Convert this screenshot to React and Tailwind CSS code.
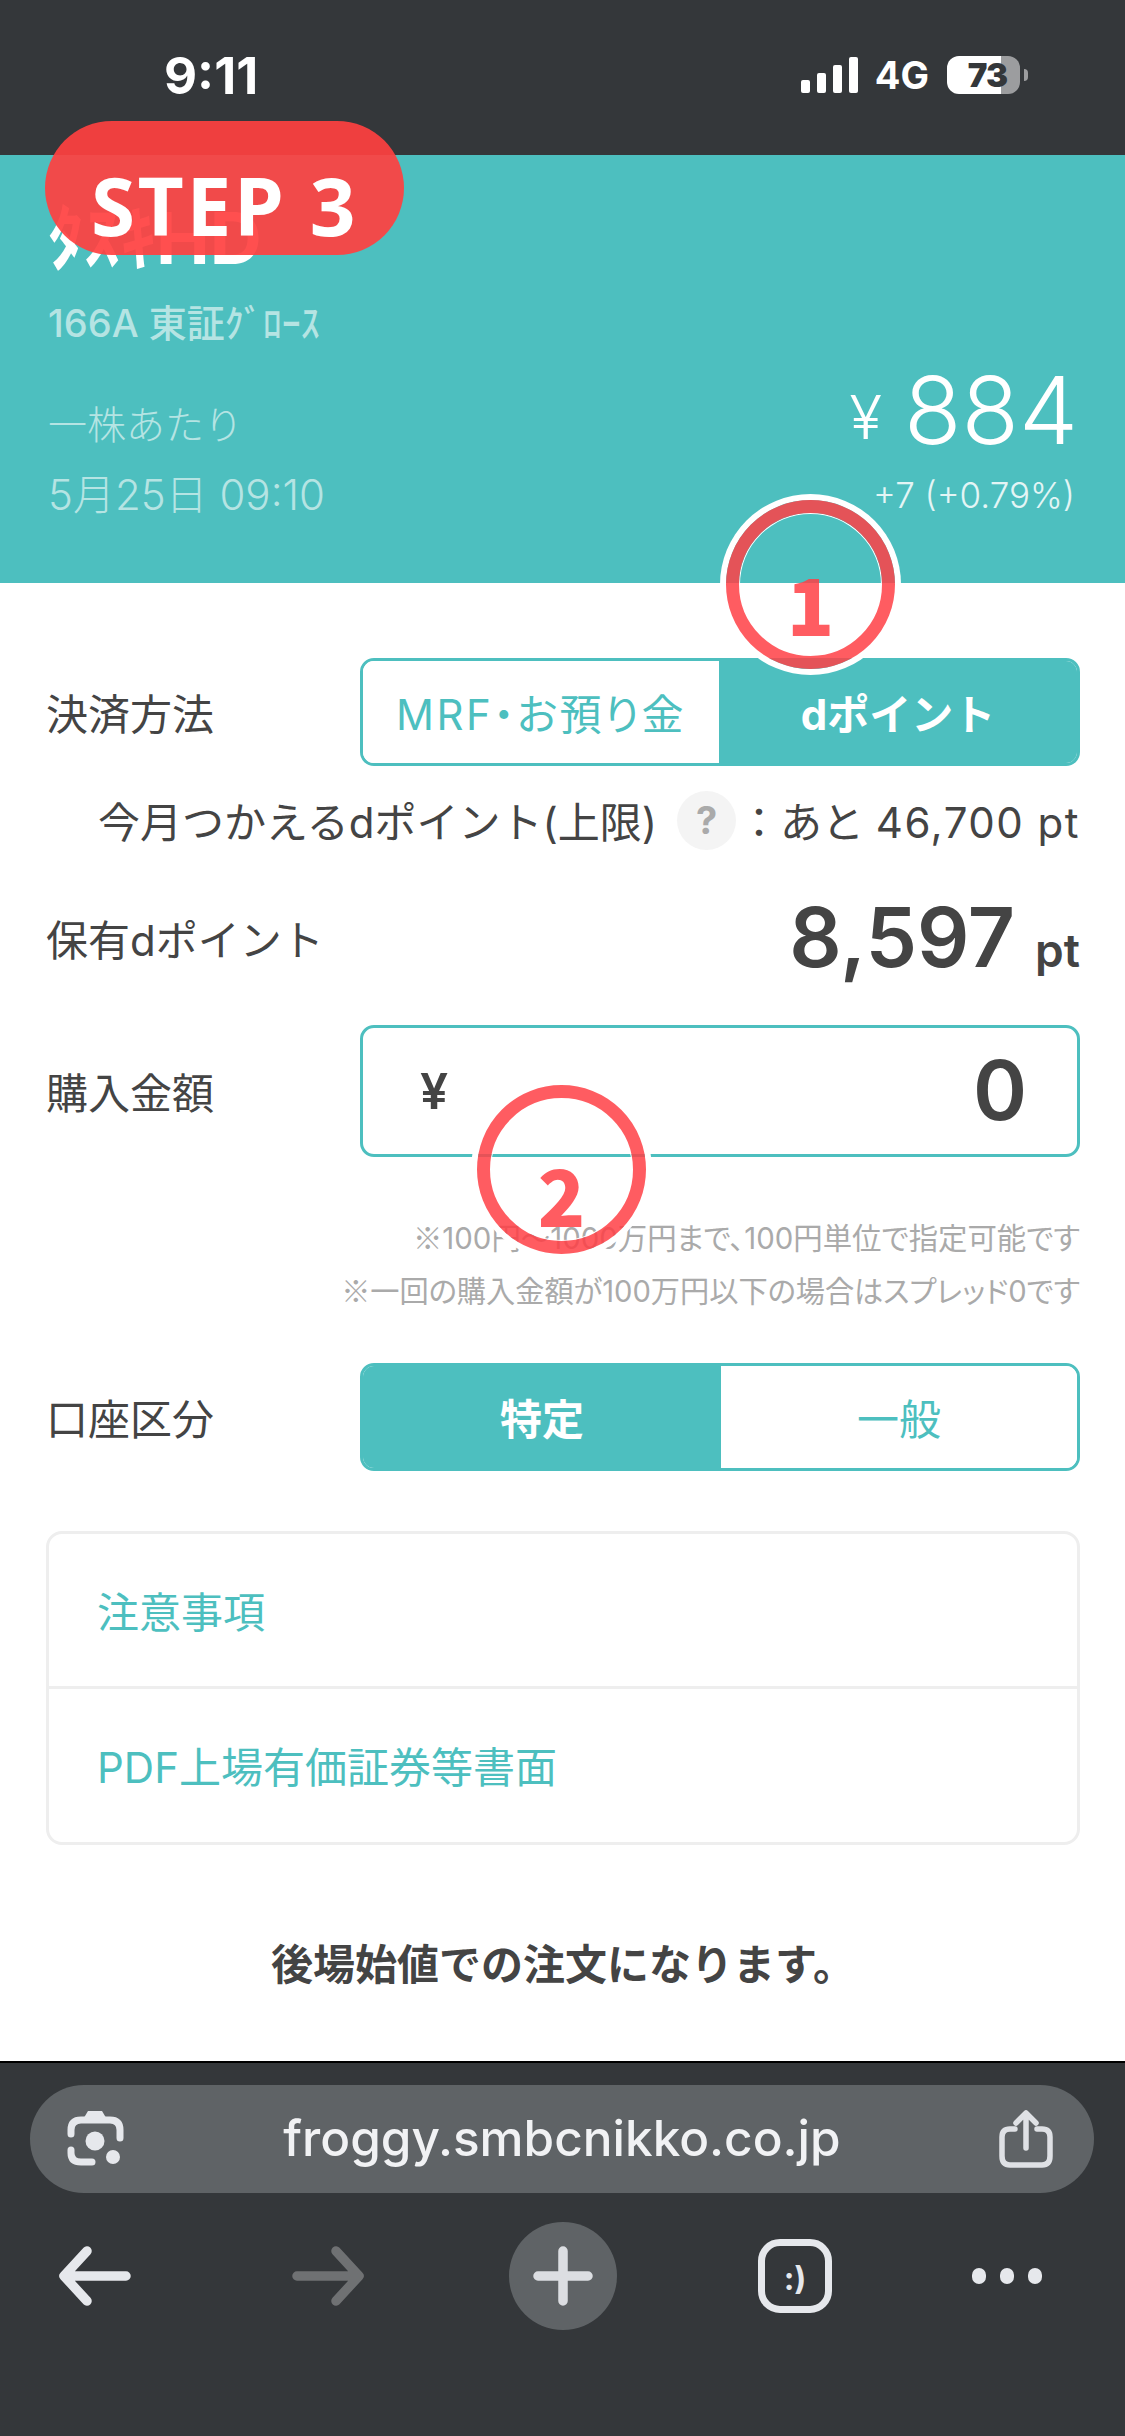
import React from "react";

const JP = "font-['Inter','Noto_Sans_CJK_JP',sans-serif]";
const CJK = "font-['Noto_Sans_CJK_JP',sans-serif]";

const Segment = ({ left, right, active, split }) => (
  <div className="flex h-[108px] w-[720px] overflow-hidden rounded-[14px] border-[3px] border-[#4dbfbf] text-[42px] leading-none">
    <div
      className={`flex h-full items-center justify-center pt-[5px] ${split} ${
        active === "left" ? "bg-[#4dbfbf] font-bold text-white" : "bg-white text-[#4dbfbf]"
      }`}
    >
      {left}
    </div>
    <div
      className={`flex h-full flex-1 items-center justify-center pt-[5px] ${
        active === "right" ? "bg-[#4dbfbf] font-bold text-white" : "bg-white text-[#4dbfbf]"
      }`}
    >
      {right}
    </div>
  </div>
);

const Label = ({ children }) => (
  <div className="w-[314px] shrink-0 pt-[6px] text-[42px] leading-none text-[#444444]">{children}</div>
);

const LensIcon = () => (
  <svg width="90" height="90" viewBox="0 0 90 90" fill="none" stroke="#e6e8ec" strokeWidth="7" strokeLinecap="round" className="-mr-[15px]">
    <path d="M21 40V36Q21 26 31 26H60Q70 26 70 36V44" />
    <path d="M21 56V59Q21 68 31 68H42" />
    <path d="M32 27L38 17H52L58 27Z" fill="#e6e8ec" stroke="none" />
    <circle cx="45" cy="47" r="9.5" fill="#e6e8ec" stroke="none" />
    <circle cx="63" cy="63" r="7" fill="#e6e8ec" stroke="none" />
  </svg>
);

const ShareIcon = () => (
  <svg width="54" height="58" viewBox="0 0 54 58" fill="none" stroke="#dfe1e5" strokeWidth="5.5" strokeLinecap="round" strokeLinejoin="round">
    <path d="M16 19H11Q3 19 3 27V46Q3 55 11 55H43Q51 55 51 46V27Q51 19 43 19H38" />
    <path d="M27 38V4M17 13L27 3L37 13" />
  </svg>
);

const Arrow = ({ color, flip }) => (
  <svg
    width="72"
    height="60"
    viewBox="0 0 72 60"
    fill="none"
    stroke={color}
    strokeWidth="9.5"
    strokeLinecap="round"
    strokeLinejoin="round"
    className={flip ? "-scale-x-100" : ""}
  >
    <path d="M5 30H67M28 5L5 30L28 55" />
  </svg>
);

const Marker = ({ num, className, numClass }) => (
  <div
    className={`absolute flex items-center justify-center rounded-full border-[13px] border-[#ff3f45]/[0.85] shadow-[0_0_0_6px_white,inset_0_0_0_1px_white] ${CJK} text-[78px] leading-none font-black text-[#ff3f45]/[0.85] ${className}`}
  >
    <span className={numClass}>{num}</span>
  </div>
);

const App = () => {
  return (
    <div className={`relative flex h-[2436px] w-[1125px] flex-col overflow-hidden bg-white ${JP}`}>
      {/* status bar */}
      <div className="flex h-[155px] shrink-0 items-start bg-[#34373a] text-white">
        <div className="ml-[164px] mt-[47px] text-[51px] leading-[58px] font-bold">9:11</div>
        <div className="ml-auto mr-[97px] mt-[56px] flex items-center">
          <svg width="57" height="36" viewBox="0 0 57 36" fill="white">
            <rect x="0" y="23" width="9" height="13" rx="2" />
            <rect x="16" y="16" width="9" height="20" rx="2" />
            <rect x="32" y="8" width="9" height="28" rx="2" />
            <rect x="48" y="0" width="9" height="36" rx="2" />
          </svg>
          <div className="ml-[17px] text-[38px] leading-none font-bold">4G</div>
          <div className="ml-[18px] flex h-[38px] w-[73px] items-center justify-end rounded-[12px] bg-[linear-gradient(90deg,#ffffff_74%,#9c9d9f_74%)] pr-[13px] text-[33px] leading-none font-black tracking-[-1px] text-[#34373a]">
            73
          </div>
          <div className="ml-[4px] h-[12px] w-[4px] rounded-r-full bg-[#9c9d9f]" />
        </div>
      </div>

      {/* stock header */}
      <div className="h-[428px] shrink-0 bg-[#4dbfbf] pl-[48px] pr-[50px] pt-[50px] text-white">
        <div className="h-[66px] text-[72px] leading-[66px] font-bold">ﾀｽｷHD</div>
        <div className="mt-[34px] h-[36px] text-[38px] leading-[36px] font-medium text-[#b5e4e3]">166A 東証ｸﾞﾛｰｽ</div>
        <div className="mt-[24px] flex h-[92px] items-end justify-between">
          <div className="mb-[9px] text-[39px] leading-[46px] font-light text-[#b5e4e3]">一株あたり</div>
          <div className="-mr-[3px] mt-[2px] flex items-center font-light leading-none">
            <span className="mt-[14px] text-[60px]">¥</span>
            <span className="ml-[22px] text-[94px]">884</span>
          </div>
        </div>
        <div className="mt-[15px] flex h-[46px] items-center justify-between font-light">
          <div className="text-[42px] leading-[46px] text-[#b5e4e3]">5月25日 09:10</div>
          <div className="text-[35px] leading-[46px] text-[#e3f5f5]">+7 (+0.79%)</div>
        </div>
      </div>

      {/* order form */}
      <div className="flex flex-1 flex-col pl-[46px] pr-[45px] pt-[75px]">
        <div className="flex items-center">
          <Label>決済方法</Label>
          <Segment
            left={<span className="tracking-[2.5px] [font-feature-settings:'palt']">MRF・お預り金</span>}
            right="dポイント"
            active="right"
            split="w-[356px]"
          />
        </div>
        <div className="mt-[24px] flex h-[60px] items-center justify-end pt-[5px] text-[42px] leading-none text-[#444444]">
          <span>今月つかえるdポイント(上限)</span>
          <span className="-mt-[5px] ml-[20px] flex h-[59px] w-[59px] items-center justify-center rounded-full bg-[#f4f4f4] text-[38px] font-bold text-[#aaaaaa]">
            ?
          </span>
          <span className="ml-[2px]">
            ：あと <span className="tracking-[1.5px]">46,700 pt</span>
          </span>
        </div>
        <div className="mt-[48px] flex h-[80px] items-center justify-between">
          <Label>保有dポイント</Label>
          <div className="flex items-baseline font-semibold leading-none text-[#444444]">
            <span className="text-[82px]">8,597</span>
            <span className="ml-[20px] text-[46px]">pt</span>
          </div>
        </div>
        <div className="mt-[47px] flex items-center">
          <Label>購入金額</Label>
          <div className="flex h-[132px] w-[720px] items-center justify-between rounded-[14px] border-[3px] border-[#4dbfbf] pl-[57px] pr-[50px] font-semibold leading-none text-[#444444]">
            <span className="text-[50px]">¥</span>
            <span className="text-[82px]">0</span>
          </div>
        </div>
        <div className="mt-[59px] h-[40px] text-right text-[29.4px] leading-[40px] text-[#aaaaaa] [font-feature-settings:'palt']">
          <span className={CJK}>※</span>100円～1000万円まで、100円単位で指定可能です
        </div>
        <div className="mt-[13px] h-[40px] text-right text-[29.2px] leading-[40px] text-[#aaaaaa] [font-feature-settings:'palt']">
          <span className={CJK}>※</span>一回の購入金額が100万円以下の場合はスプレッド0です
        </div>
        <div className="mt-[54px] flex items-center">
          <Label>口座区分</Label>
          <Segment left="特定" right="一般" active="left" split="w-[358px]" />
        </div>
        <div className="mt-[60px] h-[314px] rounded-[16px] border-[3px] border-[#eeeeee] text-[42px] leading-none text-[#4dbfbf]">
          <div className="flex h-[155px] items-center border-b-[3px] border-[#eeeeee] pl-[48px] pt-[5px]">注意事項</div>
          <div className="flex h-[153px] items-center pl-[48px] pt-[5px]">PDF上場有価証券等書面</div>
        </div>
        <div className="mt-[90px] h-[60px] text-center text-[42px] leading-[60px] font-bold text-[#444444]">
          後場始値での注文になります。
        </div>
      </div>

      {/* browser bar */}
      <div className="h-[375px] shrink-0 border-t-[2px] border-black bg-[#34373a] pt-[22px]">
        <div className="mx-[30px] flex h-[108px] w-[1064px] items-center rounded-full bg-[#5f6366] pl-[20px] pr-[41px]">
          <LensIcon />
          <div className="flex-1 text-center text-[49.5px] leading-none font-medium text-[#f1f2f4]">
            froggy.smbcnikko.co.jp
          </div>
          <ShareIcon />
        </div>
        <div className="mt-[29px] flex items-center pl-[59px]">
          <Arrow color="#e6e8ec" />
          <div className="ml-[161px]">
            <Arrow color="#6f7173" flip />
          </div>
          <div className="ml-[145px] flex h-[108px] w-[108px] items-center justify-center rounded-full bg-[#5f6366]">
            <svg width="60" height="60" viewBox="0 0 60 60" stroke="#dcdee2" strokeWidth="9.5" strokeLinecap="round">
              <path d="M30 5V55M5 30H55" />
            </svg>
          </div>
          <div className="ml-[141px] flex h-[74px] w-[74px] items-center justify-center rounded-[22px] border-[7px] border-[#e6e8ec] text-[32px] leading-none font-bold text-[#e6e8ec]">
            <span className="mt-[6px]">:)</span>
          </div>
          <div className="ml-[140px] flex gap-[14px]">
            <div className="h-[16px] w-[14px] rounded-full bg-[#e6e8ec]" />
            <div className="h-[16px] w-[14px] rounded-full bg-[#e6e8ec]" />
            <div className="h-[16px] w-[14px] rounded-full bg-[#e6e8ec]" />
          </div>
        </div>
      </div>

      {/* annotations on top of the screenshot */}
      <div className="absolute left-[45px] top-[121px] flex h-[134px] w-[359px] items-center justify-center rounded-full bg-[#ff4040]/[0.92]">
        <span className="mt-[34px] font-['Open_Sans',sans-serif] text-[80px] leading-none font-bold tracking-[2.5px] text-white">STEP 3</span>
      </div>
      <Marker num="1" className="left-[726px] top-[500px] h-[169px] w-[169px]" numClass="mt-[34px]" />
      <Marker num="2" className="left-[477px] top-[1085px] h-[169px] w-[169px]" numClass="mt-[46px]" />
    </div>
  );
};

export default App;
